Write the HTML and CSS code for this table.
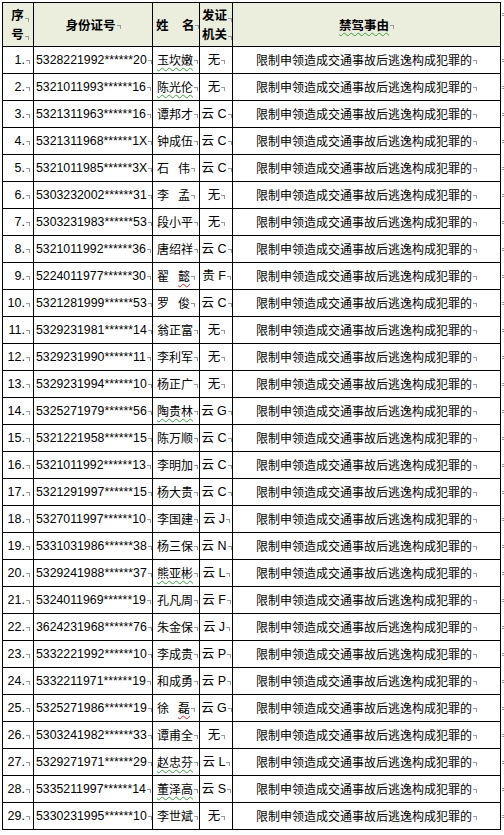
FILE: index.html
```html
<!DOCTYPE html>
<html lang="zh-CN">
<head>
<meta charset="utf-8">
<title>禁驾名单</title>
<link rel="stylesheet" href="styles.css">
</head>
<body>
<div class="sheet">
  <div class="hd c-no first"><span class="hstack"><span>序<i class="m"></i></span><span>号<i class="m"></i></span></span></div>
  <div class="hd c-id">身份证号<i class="m"></i></div>
  <div class="hd c-nm">姓<span class="gap-h"></span>名<i class="m"></i></div>
  <div class="hd c-org"><span class="hstack"><span>发证<i class="m"></i></span><span>机关<i class="m"></i></span></span></div>
  <div class="hd c-rs"><span class="gw">禁驾事由</span><i class="m"></i></div>
  <div class="end top"><i class="em"></i></div>

  <div class="c c-no first">1.<i class="m"></i></div><div class="c c-id">5328221992******20<i class="m"></i></div><div class="c c-nm"><span class="gw">玉坎嫩</span><i class="m"></i></div><div class="c c-org">无<i class="m"></i></div><div class="c c-rs">限制申领造成交通事故后逃逸构成犯罪的<i class="m"></i></div><div class="end"><i class="em"></i></div>
  <div class="c c-no first">2.<i class="m"></i></div><div class="c c-id">5321011993******16<i class="m"></i></div><div class="c c-nm"><span class="gw">陈光伦</span><i class="m"></i></div><div class="c c-org">无<i class="m"></i></div><div class="c c-rs">限制申领造成交通事故后逃逸构成犯罪的<i class="m"></i></div><div class="end"><i class="em"></i></div>
  <div class="c c-no first">3.<i class="m"></i></div><div class="c c-id">5321311963******16<i class="m"></i></div><div class="c c-nm">谭邦才<i class="m"></i></div><div class="c c-org">云 C<i class="m"></i></div><div class="c c-rs">限制申领造成交通事故后逃逸构成犯罪的<i class="m"></i></div><div class="end"><i class="em"></i></div>
  <div class="c c-no first">4.<i class="m"></i></div><div class="c c-id">5321311968******1X<i class="m"></i></div><div class="c c-nm">钟成伍<i class="m"></i></div><div class="c c-org">云 C<i class="m"></i></div><div class="c c-rs">限制申领造成交通事故后逃逸构成犯罪的<i class="m"></i></div><div class="end"><i class="em"></i></div>
  <div class="c c-no first">5.<i class="m"></i></div><div class="c c-id">5321011985******3X<i class="m"></i></div><div class="c c-nm">石<span class="gap"></span>伟<i class="m"></i></div><div class="c c-org">云 C<i class="m"></i></div><div class="c c-rs">限制申领造成交通事故后逃逸构成犯罪的<i class="m"></i></div><div class="end"><i class="em"></i></div>
  <div class="c c-no first">6.<i class="m"></i></div><div class="c c-id">5303232002******31<i class="m"></i></div><div class="c c-nm">李<span class="gap"></span>孟<i class="m"></i></div><div class="c c-org">无<i class="m"></i></div><div class="c c-rs">限制申领造成交通事故后逃逸构成犯罪的<i class="m"></i></div><div class="end"><i class="em"></i></div>
  <div class="c c-no first">7.<i class="m"></i></div><div class="c c-id">5303231983******53<i class="m"></i></div><div class="c c-nm">段小平<i class="m"></i></div><div class="c c-org">无<i class="m"></i></div><div class="c c-rs">限制申领造成交通事故后逃逸构成犯罪的<i class="m"></i></div><div class="end"><i class="em"></i></div>
  <div class="c c-no first">8.<i class="m"></i></div><div class="c c-id">5321011992******36<i class="m"></i></div><div class="c c-nm">唐绍祥<i class="m"></i></div><div class="c c-org">云 C<i class="m"></i></div><div class="c c-rs">限制申领造成交通事故后逃逸构成犯罪的<i class="m"></i></div><div class="end"><i class="em"></i></div>
  <div class="c c-no first">9.<i class="m"></i></div><div class="c c-id">5224011977******30<i class="m"></i></div><div class="c c-nm">翟<span class="gap"></span><span class="rw">懿</span><i class="m"></i></div><div class="c c-org">贵 F<i class="m"></i></div><div class="c c-rs">限制申领造成交通事故后逃逸构成犯罪的<i class="m"></i></div><div class="end"><i class="em"></i></div>
  <div class="c c-no first">10.<i class="m"></i></div><div class="c c-id">5321281999******53<i class="m"></i></div><div class="c c-nm">罗<span class="gap"></span>俊<i class="m"></i></div><div class="c c-org">云 C<i class="m"></i></div><div class="c c-rs">限制申领造成交通事故后逃逸构成犯罪的<i class="m"></i></div><div class="end"><i class="em"></i></div>
  <div class="c c-no first">11.<i class="m"></i></div><div class="c c-id">5329231981******14<i class="m"></i></div><div class="c c-nm">翁正富<i class="m"></i></div><div class="c c-org">无<i class="m"></i></div><div class="c c-rs">限制申领造成交通事故后逃逸构成犯罪的<i class="m"></i></div><div class="end"><i class="em"></i></div>
  <div class="c c-no first">12.<i class="m"></i></div><div class="c c-id">5329231990******11<i class="m"></i></div><div class="c c-nm">李利军<i class="m"></i></div><div class="c c-org">无<i class="m"></i></div><div class="c c-rs">限制申领造成交通事故后逃逸构成犯罪的<i class="m"></i></div><div class="end"><i class="em"></i></div>
  <div class="c c-no first">13.<i class="m"></i></div><div class="c c-id">5329231994******10<i class="m"></i></div><div class="c c-nm">杨正广<i class="m"></i></div><div class="c c-org">无<i class="m"></i></div><div class="c c-rs">限制申领造成交通事故后逃逸构成犯罪的<i class="m"></i></div><div class="end"><i class="em"></i></div>
  <div class="c c-no first">14.<i class="m"></i></div><div class="c c-id">5325271979******56<i class="m"></i></div><div class="c c-nm"><span class="gw">陶贵林</span><i class="m"></i></div><div class="c c-org">云 G<i class="m"></i></div><div class="c c-rs">限制申领造成交通事故后逃逸构成犯罪的<i class="m"></i></div><div class="end"><i class="em"></i></div>
  <div class="c c-no first">15.<i class="m"></i></div><div class="c c-id">5321221958******15<i class="m"></i></div><div class="c c-nm">陈万顺<i class="m"></i></div><div class="c c-org">云 C<i class="m"></i></div><div class="c c-rs">限制申领造成交通事故后逃逸构成犯罪的<i class="m"></i></div><div class="end"><i class="em"></i></div>
  <div class="c c-no first">16.<i class="m"></i></div><div class="c c-id">5321011992******13<i class="m"></i></div><div class="c c-nm">李明加<i class="m"></i></div><div class="c c-org">云 C<i class="m"></i></div><div class="c c-rs">限制申领造成交通事故后逃逸构成犯罪的<i class="m"></i></div><div class="end"><i class="em"></i></div>
  <div class="c c-no first">17.<i class="m"></i></div><div class="c c-id">5321291997******15<i class="m"></i></div><div class="c c-nm">杨大贵<i class="m"></i></div><div class="c c-org">云 C<i class="m"></i></div><div class="c c-rs">限制申领造成交通事故后逃逸构成犯罪的<i class="m"></i></div><div class="end"><i class="em"></i></div>
  <div class="c c-no first">18.<i class="m"></i></div><div class="c c-id">5327011997******10<i class="m"></i></div><div class="c c-nm">李国建<i class="m"></i></div><div class="c c-org">云 J<i class="m"></i></div><div class="c c-rs">限制申领造成交通事故后逃逸构成犯罪的<i class="m"></i></div><div class="end"><i class="em"></i></div>
  <div class="c c-no first">19.<i class="m"></i></div><div class="c c-id">5331031986******38<i class="m"></i></div><div class="c c-nm">杨三保<i class="m"></i></div><div class="c c-org">云 N<i class="m"></i></div><div class="c c-rs">限制申领造成交通事故后逃逸构成犯罪的<i class="m"></i></div><div class="end"><i class="em"></i></div>
  <div class="c c-no first">20.<i class="m"></i></div><div class="c c-id">5329241988******37<i class="m"></i></div><div class="c c-nm"><span class="gw">熊亚彬</span><i class="m"></i></div><div class="c c-org">云 L<i class="m"></i></div><div class="c c-rs">限制申领造成交通事故后逃逸构成犯罪的<i class="m"></i></div><div class="end"><i class="em"></i></div>
  <div class="c c-no first">21.<i class="m"></i></div><div class="c c-id">5324011969******19<i class="m"></i></div><div class="c c-nm">孔凡周<i class="m"></i></div><div class="c c-org">云 F<i class="m"></i></div><div class="c c-rs">限制申领造成交通事故后逃逸构成犯罪的<i class="m"></i></div><div class="end"><i class="em"></i></div>
  <div class="c c-no first">22.<i class="m"></i></div><div class="c c-id">3624231968******76<i class="m"></i></div><div class="c c-nm">朱金保<i class="m"></i></div><div class="c c-org">云 J<i class="m"></i></div><div class="c c-rs">限制申领造成交通事故后逃逸构成犯罪的<i class="m"></i></div><div class="end"><i class="em"></i></div>
  <div class="c c-no first">23.<i class="m"></i></div><div class="c c-id">5332221992******10<i class="m"></i></div><div class="c c-nm">李成贵<i class="m"></i></div><div class="c c-org">云 P<i class="m"></i></div><div class="c c-rs">限制申领造成交通事故后逃逸构成犯罪的<i class="m"></i></div><div class="end"><i class="em"></i></div>
  <div class="c c-no first">24.<i class="m"></i></div><div class="c c-id">5332211971******19<i class="m"></i></div><div class="c c-nm">和成勇<i class="m"></i></div><div class="c c-org">云 P<i class="m"></i></div><div class="c c-rs">限制申领造成交通事故后逃逸构成犯罪的<i class="m"></i></div><div class="end"><i class="em"></i></div>
  <div class="c c-no first">25.<i class="m"></i></div><div class="c c-id">5325271986******19<i class="m"></i></div><div class="c c-nm">徐<span class="gap"></span><span class="rw">磊</span><i class="m"></i></div><div class="c c-org">云 G<i class="m"></i></div><div class="c c-rs">限制申领造成交通事故后逃逸构成犯罪的<i class="m"></i></div><div class="end"><i class="em"></i></div>
  <div class="c c-no first">26.<i class="m"></i></div><div class="c c-id">5303241982******33<i class="m"></i></div><div class="c c-nm">谭甫全<i class="m"></i></div><div class="c c-org">无<i class="m"></i></div><div class="c c-rs">限制申领造成交通事故后逃逸构成犯罪的<i class="m"></i></div><div class="end"><i class="em"></i></div>
  <div class="c c-no first">27.<i class="m"></i></div><div class="c c-id">5329271971******29<i class="m"></i></div><div class="c c-nm"><span class="gw">赵忠芬</span><i class="m"></i></div><div class="c c-org">云 L<i class="m"></i></div><div class="c c-rs">限制申领造成交通事故后逃逸构成犯罪的<i class="m"></i></div><div class="end"><i class="em"></i></div>
  <div class="c c-no first">28.<i class="m"></i></div><div class="c c-id">5335211997******14<i class="m"></i></div><div class="c c-nm"><span class="gw">董泽高</span><i class="m"></i></div><div class="c c-org">云 S<i class="m"></i></div><div class="c c-rs">限制申领造成交通事故后逃逸构成犯罪的<i class="m"></i></div><div class="end"><i class="em"></i></div>
  <div class="c c-no first">29.<i class="m"></i></div><div class="c c-id">5330231995******10<i class="m"></i></div><div class="c c-nm">李世斌<i class="m"></i></div><div class="c c-org">无<i class="m"></i></div><div class="c c-rs">限制申领造成交通事故后逃逸构成犯罪的<i class="m"></i></div><div class="end"><i class="em"></i></div>
</div>
</body>
</html>
```

FILE: styles.css
```css
html, body {
  margin: 0;
  padding: 0;
  background: #ffffff;
}

body {
  padding: 2px 0 0 2px;
  font-family: "Noto Sans CJK SC", sans-serif;
  font-size: 12px;
  color: #000;
}

.sheet {
  display: grid;
  grid-template-columns: 32px 119px 47px 33px 268px 4px;
  grid-template-rows: 45px;
  grid-auto-rows: 27px;
  width: max-content;
}

.hd, .c {
  box-sizing: border-box;
  border-right: 1px solid #000;
  border-bottom: 1px solid #000;
  display: flex;
  align-items: center;
  white-space: nowrap;
  overflow: hidden;
  line-height: 14px;
}

.hd {
  border-top: 1px solid #000;
  background: #ebeedd;
  font-weight: 700;
  font-size: 12.5px;
  justify-content: center;
}

.first {
  border-left: 1px solid #000;
}

.hstack {
  display: flex;
  flex-direction: column;
  align-items: flex-start;
  line-height: 18.5px;
}

.hd.c-no .hstack {
  padding-left: 4px;
}

.hd.c-org .hstack {
  padding-left: 2px;
}

.hd.c-nm {
  justify-content: flex-start;
  padding-left: 3px;
}

.gap-h {
  display: inline-block;
  width: 16px;
}

.c {
  font-size: 12px;
}

.c.c-no {
  justify-content: flex-end;
  padding-right: 3px;
  font-family: "Liberation Sans", sans-serif;
  font-size: 12.5px;
}

.c.c-id {
  padding-left: 2px;
  font-family: "Liberation Sans", "Noto Sans CJK SC", sans-serif;
  font-size: 12.3px;
}

.c.c-nm {
  padding-left: 4px;
}

.gap {
  display: inline-block;
  width: 9px;
}

.c.c-org {
  justify-content: center;
  font-family: "Liberation Sans", "Noto Sans CJK SC", sans-serif;
  font-size: 12.5px;
  padding-left: 1px;
}

.c.c-rs {
  padding-left: 23px;
}

.m {
  display: inline-block;
  width: 3px;
  height: 3px;
  margin-left: 1px;
  margin-top: 4px;
  border-right: 1px solid #9a9a9a;
  border-top: 1px solid #9a9a9a;
  align-self: center;
}

.hstack .m {
  margin-top: 6px;
  vertical-align: middle;
}

.end {
  display: flex;
  align-items: center;
  justify-content: flex-end;
}

.end.top {
  align-items: flex-start;
  padding-top: 11px;
}

.em {
  display: block;
  width: 3px;
  height: 3px;
  border-top: 1px solid #9a9a9a;
  border-bottom: 1px solid #9a9a9a;
  box-sizing: border-box;
}

.gw {
  text-decoration: underline wavy #3aa03a;
  text-decoration-thickness: 1px;
  text-underline-offset: 2px;
}

.rw {
  text-decoration: underline wavy #e02020;
  text-decoration-thickness: 1px;
  text-underline-offset: 2px;
}
```
